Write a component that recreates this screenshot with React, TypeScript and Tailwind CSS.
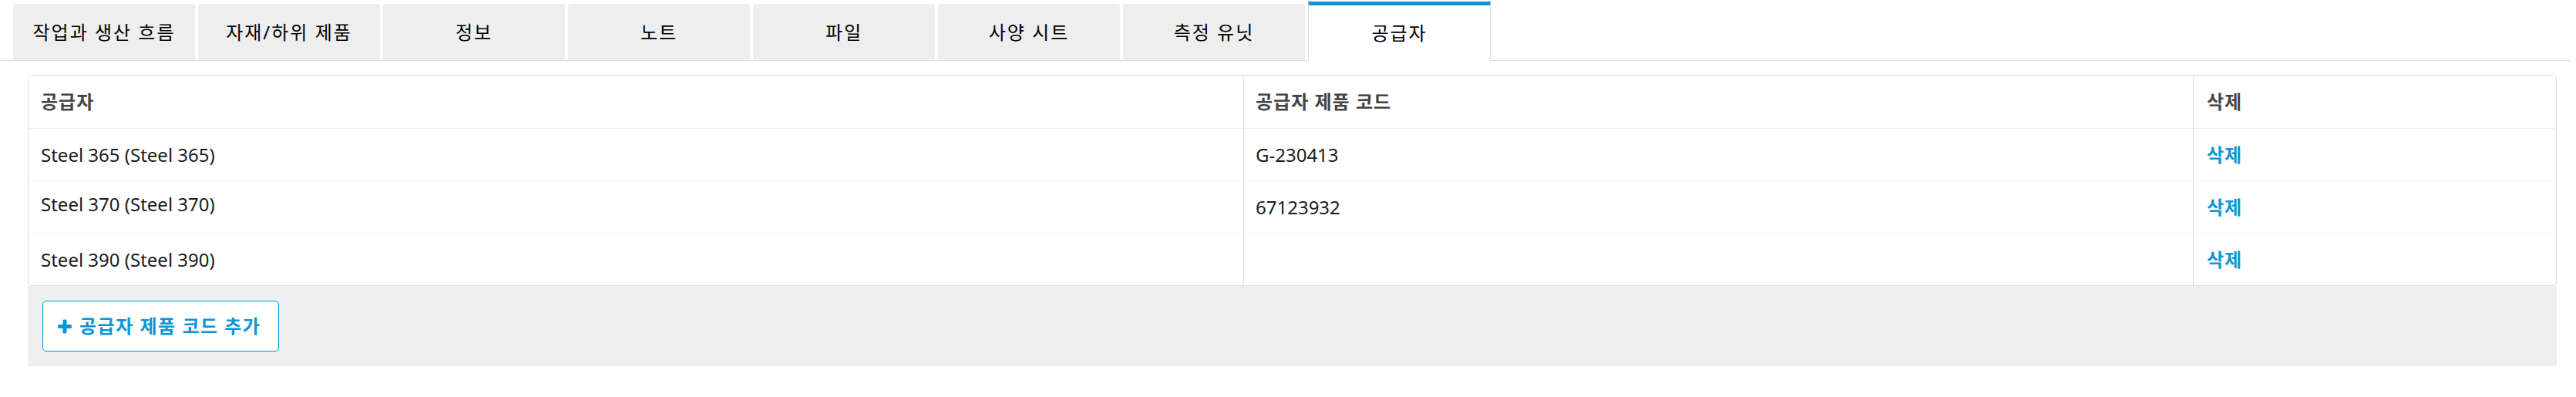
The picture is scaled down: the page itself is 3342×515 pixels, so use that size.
import React from "react";

const tabs = [
  "작업과 생산 흐름",
  "자재/하위 제품",
  "정보",
  "노트",
  "파일",
  "사양 시트",
  "측정 유닛",
  "공급자",
];

const rows = [
  { supplier: "Steel 365 (Steel 365)", code: "G-230413", lift: false },
  { supplier: "Steel 370 (Steel 370)", code: "67123932", lift: true },
  { supplier: "Steel 390 (Steel 390)", code: "", lift: false },
];

function PlusIcon() {
  return (
    <svg width="18" height="19" viewBox="0 0 18 19" className="shrink-0">
      <rect x="6.5" y="0.5" width="5" height="18" rx="1.5" fill="#0a96d6" />
      <rect x="0" y="7" width="18" height="5" rx="1.5" fill="#0a96d6" />
    </svg>
  );
}

export default function App() {
  const active = tabs.length - 1;
  return (
    <div
      className="h-[515px] w-[3342px] bg-white text-[#1c1c1c]"
      style={{ fontFamily: '"Noto Sans", "Noto Sans CJK KR", sans-serif' }}
    >
      {/* tab strip */}
      <div className="flex h-[79px] w-[3335px] items-end gap-[4px] border-b border-[#dddddd] pl-[17px]">
        {tabs.map((t, i) =>
          i === active ? (
            <div
              key={t}
              className="-mb-px flex h-[77px] w-[237px] items-center justify-center border-x border-t-[5px] border-x-[#dddddd] border-t-[#0a96d6] bg-white text-[24px] tracking-[2px] text-black"
            >
              {t}
            </div>
          ) : (
            <div
              key={t}
              className="flex h-[73px] w-[236px] items-center justify-center rounded-t-[4px] bg-[#eeeeee] text-[24px] tracking-[2px] text-black"
            >
              {t}
            </div>
          )
        )}
      </div>

      <div className="ml-[36px] mt-[18px] w-[3281px]">
        {/* table card */}
        <div className="overflow-hidden rounded-[5px] border border-[#dddddd] bg-white">
          <div className="grid grid-cols-[1576px_1232px_1fr]">
            <div className="flex h-[69px] items-center border-b border-[#eeeeee] pl-[16px] text-[24px] font-bold tracking-[1px] text-[#444444]">
              공급자
            </div>
            <div className="flex h-[69px] items-center border-b border-l border-b-[#eeeeee] border-l-[#dddddd] pl-[15px] text-[24px] font-bold tracking-[1px] text-[#444444]">
              공급자 제품 코드
            </div>
            <div className="flex h-[69px] items-center border-b border-l border-b-[#eeeeee] border-l-[#dddddd] pl-[17px] text-[24px] font-bold tracking-[1px] text-[#444444]">
              삭제
            </div>

            {rows.map((r, i) => {
              const last = i === rows.length - 1;
              const rowCls = last ? "h-[67px]" : "h-[68px] border-b border-b-[#f2f2f2]";
              return (
                <React.Fragment key={r.supplier}>
                  <div
                    className={`flex items-center pl-[16px] text-[24px] ${rowCls} ${
                      r.lift ? "pb-[8px]" : ""
                    }`}
                  >
                    {r.supplier}
                  </div>
                  <div className={`flex items-center border-l border-l-[#dddddd] pl-[15px] text-[24px] ${rowCls}`}>
                    {r.code}
                  </div>
                  <div
                    className={`flex items-center border-l border-l-[#dddddd] pl-[17px] text-[24px] font-bold tracking-[1px] text-[#0a96d6] ${rowCls}`}
                  >
                    삭제
                  </div>
                </React.Fragment>
              );
            })}
          </div>
        </div>

        {/* footer */}
        <div className="bg-[#eeeeee] px-[19px] py-[19px]">
          <button className="flex h-[66px] w-[307px] items-center gap-[10px] rounded-[5px] border border-[#0a96d6] bg-white pl-[19px] text-[24px] font-bold tracking-[1.5px] text-[#0a96d6]">
            <PlusIcon />
            <span>공급자 제품 코드 추가</span>
          </button>
        </div>
      </div>
    </div>
  );
}
